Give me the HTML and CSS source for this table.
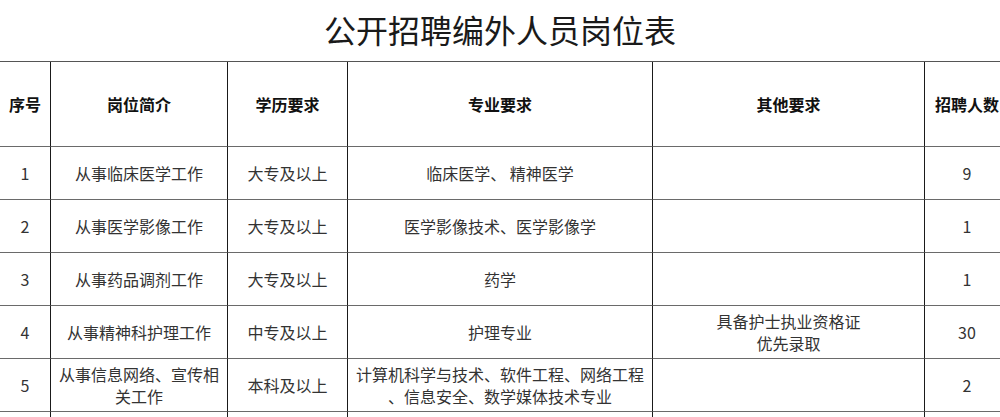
FILE: index.html
```html
<!DOCTYPE html>
<html lang="zh-CN">
<head>
<meta charset="utf-8">
<title>公开招聘编外人员岗位表</title>
<link rel="stylesheet" href="styles.css">
</head>
<body>
<div class="page">
  <h1 class="title">公开招聘编外人员岗位表</h1>
  <table class="jobs">
    <thead>
      <tr class="head-row">
        <th class="c1">序号</th>
        <th class="c2">岗位简介</th>
        <th class="c3">学历要求</th>
        <th class="c4">专业要求</th>
        <th class="c5">其他要求</th>
        <th class="c6">招聘人数</th>
      </tr>
    </thead>
    <tbody>
      <tr>
        <td>1</td>
        <td>从事临床医学工作</td>
        <td>大专及以上</td>
        <td>临床医学、 精神医学</td>
        <td></td>
        <td>9</td>
      </tr>
      <tr>
        <td>2</td>
        <td>从事医学影像工作</td>
        <td>大专及以上</td>
        <td>医学影像技术、医学影像学</td>
        <td></td>
        <td>1</td>
      </tr>
      <tr>
        <td>3</td>
        <td>从事药品调剂工作</td>
        <td>大专及以上</td>
        <td>药学</td>
        <td></td>
        <td>1</td>
      </tr>
      <tr>
        <td>4</td>
        <td>从事精神科护理工作</td>
        <td>中专及以上</td>
        <td>护理专业</td>
        <td>具备护士执业资格证<br>优先录取</td>
        <td>30</td>
      </tr>
      <tr>
        <td>5</td>
        <td>从事信息网络、宣传相<br>关工作</td>
        <td>本科及以上</td>
        <td>计算机科学与技术、软件工程、网络工程<br>、信息安全、数学媒体技术专业</td>
        <td></td>
        <td>2</td>
      </tr>
      <tr class="tail-row">
        <td></td>
        <td></td>
        <td></td>
        <td></td>
        <td></td>
        <td></td>
      </tr>
    </tbody>
  </table>
</div>
</body>
</html>
```

FILE: styles.css
```css
html, body {
  margin: 0;
  padding: 0;
  background: #ffffff;
}

body {
  width: 1000px;
  height: 417px;
  overflow: hidden;
  font-family: "Noto Sans CJK SC", "Noto Sans", sans-serif;
  color: #333333;
}

.page {
  width: 1000px;
  height: 417px;
  overflow: hidden;
}

.title {
  margin: 0;
  height: 61px;
  line-height: 58px;
  font-size: 32px;
  font-weight: 400;
  color: #1a1a1a;
  text-align: center;
}

.jobs {
  width: 1010px;
  table-layout: fixed;
  border-collapse: separate;
  border-spacing: 0;
  border-top: 1px solid #555555;
  font-size: 16px;
  line-height: 22px;
}

.jobs th,
.jobs td {
  box-sizing: border-box;
  padding: 0;
  text-align: center;
  vertical-align: middle;
  border-right: 1px solid #1a1a1a;
  border-bottom: 1px solid #6a6a6a;
  white-space: nowrap;
}

.jobs th {
  font-weight: 700;
  color: #111111;
}

.head-row {
  height: 85px;
}

.jobs tbody tr {
  height: 53px;
}

.jobs tbody tr.tail-row {
  height: 5px;
}

.jobs .tail-row td {
  height: 5px;
  line-height: 0;
  font-size: 0;
  border-bottom: 0;
}

.c1 { width: 51px; }
.c2 { width: 177px; }
.c3 { width: 120px; }
.c4 { width: 305px; }
.c5 { width: 272px; }
.c6 { width: 85px; }
```
